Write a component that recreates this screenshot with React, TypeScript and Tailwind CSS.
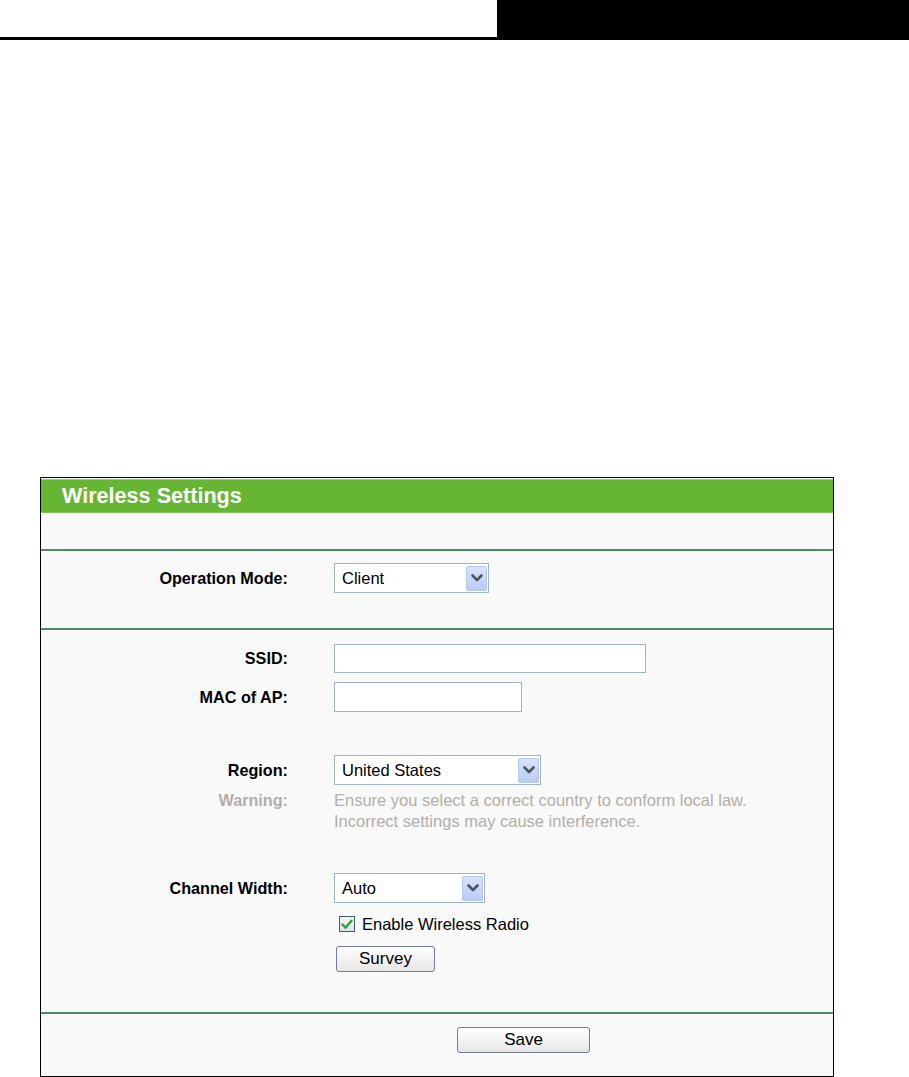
import React from 'react'

const Chevron: React.FC = () => (
  <svg width="12" height="8" viewBox="0 0 12 8" aria-hidden>
    <path d="M1.5 1.5 L6 6 L10.5 1.5" fill="none" stroke="#4b5566" strokeWidth="2.6" strokeLinecap="round" strokeLinejoin="round" />
  </svg>
)

const Select: React.FC<{ value: string; width: string }> = ({ value, width }) => (
  <div className={`${width} h-[30px] border border-[#9fb3cc] bg-white flex items-center justify-between pl-[7px] pr-[1px]`}>
    <span className="text-[16.5px] text-black leading-none">{value}</span>
    <div className="w-[21px] h-[25px] rounded-[2px] border border-[#b5c7ec] bg-gradient-to-b from-[#d9e4fb] to-[#b9cbf3] flex items-center justify-center">
      <Chevron />
    </div>
  </div>
)

const Input: React.FC<{ width: string; height: string }> = ({ width, height }) => (
  <div className={`${width} ${height} border border-[#9fb3cc] bg-white`} />
)

const Label: React.FC<{ children: React.ReactNode; muted?: boolean }> = ({ children, muted }) => (
  <div
    className={`w-[247px] shrink-0 text-right font-bold text-[16.2px] leading-[21px] ${
      muted ? 'text-[#b3aea9]' : 'text-black'
    }`}
  >
    {children}
  </div>
)

const Button: React.FC<{ children: React.ReactNode; width: string }> = ({ children, width }) => (
  <div
    className={`${width} h-[26px] rounded-[3px] border border-[#6f7e94] bg-gradient-to-b from-[#ffffff] to-[#e6e6e6] flex items-center justify-center text-[17px] text-black`}
  >
    {children}
  </div>
)

const Divider: React.FC = () => <div className="h-[2px] bg-[#4d8d69]" />

export default function App() {
  return (
    <div className="w-[909px] h-[1077px] bg-white font-['Liberation_Sans',Arial,sans-serif] overflow-hidden">
      {/* page header strip */}
      <div className="flex h-[40px]">
        <div className="w-[497px] border-b-[3px] border-black" />
        <div className="flex-1 bg-black" />
      </div>

      <div className="mt-[437px] ml-[40px] w-[794px] h-[600px] border border-black bg-[#f9f9f9] flex flex-col">
        <div className="mt-[1px] h-[34px] bg-[#66b634] border-t border-[#93d070] border-b border-b-[#7fc65a] flex items-center pl-[21px]">
          <span className="text-white font-bold text-[21.6px] leading-none">Wireless Settings</span>
        </div>
        <div className="h-[36px]" />
        <Divider />

        {/* operation mode */}
        <div className="h-[77px] pt-[12px]">
          <div className="flex items-center">
            <Label>Operation Mode:</Label>
            <div className="ml-[46px]">
              <Select value="Client" width="w-[155px]" />
            </div>
          </div>
        </div>
        <Divider />

        {/* wireless params */}
        <div className="h-[382px] pt-[14px] flex flex-col">
          <div className="flex items-center">
            <Label>SSID:</Label>
            <div className="ml-[46px]">
              <Input width="w-[312px]" height="h-[29px]" />
            </div>
          </div>
          <div className="flex items-center mt-[9px]">
            <Label>MAC of AP:</Label>
            <div className="ml-[46px]">
              <Input width="w-[188px]" height="h-[30px]" />
            </div>
          </div>

          <div className="flex items-center mt-[43px]">
            <Label>Region:</Label>
            <div className="ml-[46px]">
              <Select value="United States" width="w-[207px]" />
            </div>
          </div>
          <div className="flex items-start mt-[5px]">
            <Label muted>Warning:</Label>
            <div className="ml-[46px] text-[16.5px] leading-[21px] text-[#b3aea9]">
              Ensure you select a correct country to conform local law.
              <br />
              Incorrect settings may cause interference.
            </div>
          </div>

          <div className="flex items-center mt-[41px]">
            <Label>Channel Width:</Label>
            <div className="ml-[46px]">
              <Select value="Auto" width="w-[151px]" />
            </div>
          </div>
          <div className="flex items-center mt-[12px] ml-[298px] h-[18px]">
            <div className="w-[16px] h-[16px] border border-[#3f5a78] bg-gradient-to-b from-[#f4f4f4] to-[#dfe3e8] flex items-center justify-center">
              <svg width="12" height="11" viewBox="0 0 12 11" aria-hidden>
                <path d="M1.5 5.5 L4.5 8.8 L10.5 1.8" fill="none" stroke="#26a23a" strokeWidth="2.4" strokeLinecap="round" strokeLinejoin="round" />
              </svg>
            </div>
            <span className="ml-[7px] text-[16.5px] text-black leading-none">Enable Wireless Radio</span>
          </div>
          <div className="mt-[13px] ml-[295px]">
            <Button width="w-[99px]">Survey</Button>
          </div>
        </div>
        <Divider />

        <div className="pt-[13px] pl-[416px]">
          <Button width="w-[133px]">Save</Button>
        </div>
      </div>
    </div>
  )
}
